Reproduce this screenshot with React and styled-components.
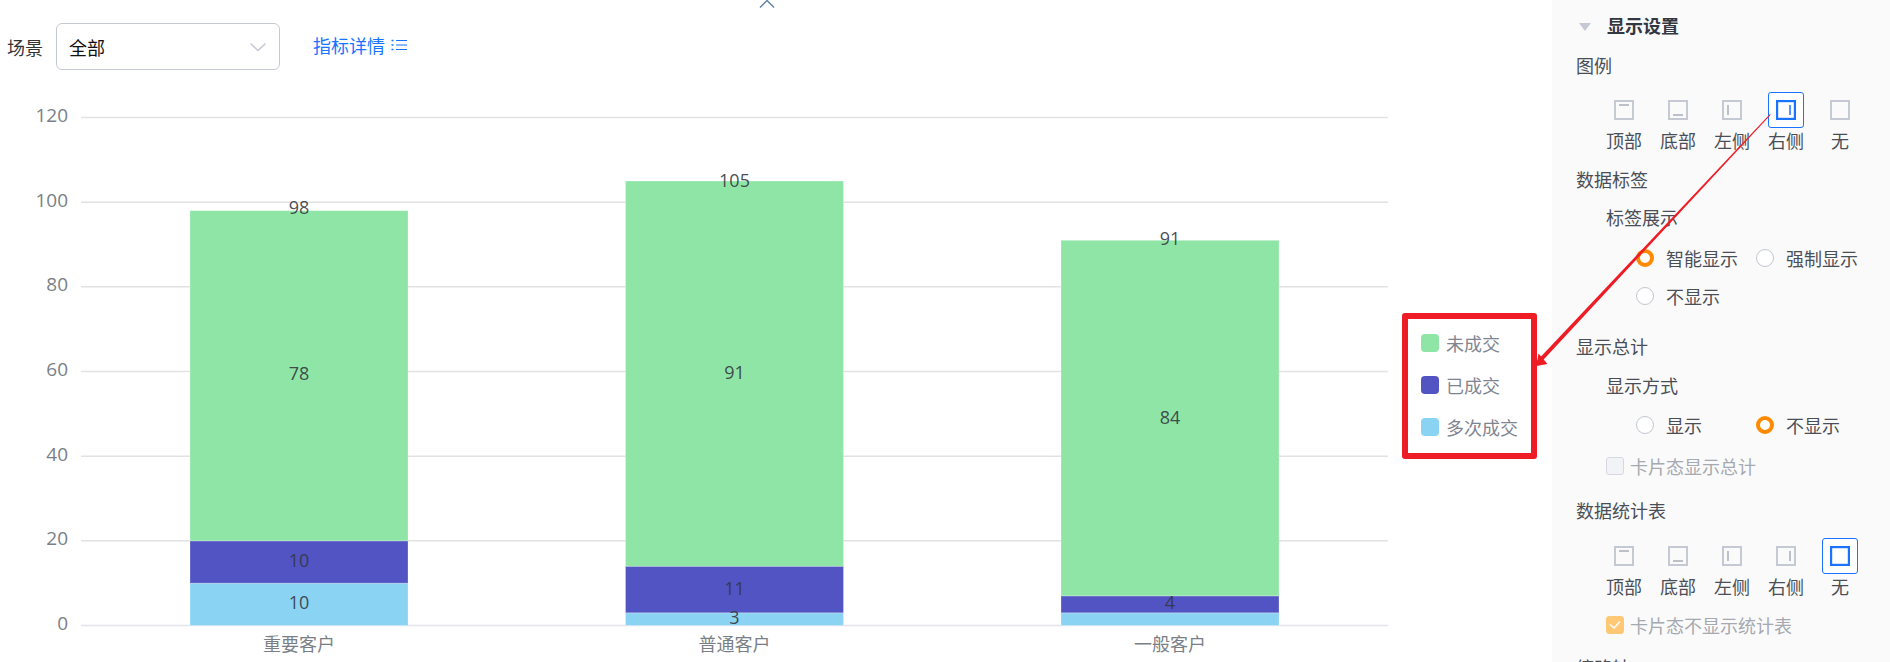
import React from "react";
import styled, { createGlobalStyle } from "styled-components";

const GlobalStyle = createGlobalStyle`
  html, body {
    margin: 0;
    padding: 0;
    background: #fff;
    font-family: "Open Sans", "Noto Sans CJK SC", sans-serif;
  }
`;

const Page = styled.div`
  position: relative;
  display: flex;
  width: 1890px;
  height: 662px;
  overflow: hidden;
`;

const Main = styled.div`
  width: 1552px;
  flex-shrink: 0;
  display: flex;
  flex-direction: column;
`;

const CollapseRow = styled.div`
  height: 8px;
  padding-right: 18px;
  display: flex;
  justify-content: center;
  align-items: flex-end;
`;

const Toolbar = styled.div`
  display: flex;
  align-items: center;
  height: 47px;
  margin-top: 15px;
  padding-left: 7px;
  font-size: 18px;
  color: #333;
`;

const Select = styled.div`
  box-sizing: border-box;
  width: 224px;
  height: 47px;
  margin-left: 13px;
  padding: 0 12px;
  display: flex;
  align-items: center;
  justify-content: space-between;
  border: 1px solid #c5c9d4;
  border-radius: 6px;
  color: #111;
`;

const DetailLink = styled.a`
  display: flex;
  align-items: center;
  gap: 6px;
  margin-left: 33px;
  margin-top: -3px;
  color: #1a73ff;
`;

const ChartRow = styled.div`
  display: flex;
  margin-top: 30px;
`;

const ChartSvg = styled.svg`
  flex-shrink: 0;
  display: block;
`;

const Tick = styled.text`
  font-size: ${(p) => p.$size || 18}px;
  fill: #7a7f87;
  text-anchor: ${(p) => p.$anchor || "end"};
  dominant-baseline: central;
`;

const BarValue = styled.text`
  font-size: 18px;
  fill: #33373f;
  fill-opacity: 0.9;
  text-anchor: middle;
  dominant-baseline: central;
`;

const Legend = styled.div`
  box-sizing: border-box;
  flex-shrink: 0;
  width: 135px;
  height: 146px;
  margin: 213px 0 0 2px;
  padding: 12px 0 0 13px;
  display: flex;
  flex-direction: column;
  gap: 18px;
  border: 6px solid #ee1c25;
  border-radius: 3px;
`;

const LegendItem = styled.div`
  display: flex;
  align-items: center;
  gap: 7px;
  height: 24px;
  font-size: 18px;
  white-space: nowrap;
  color: #7f8590;
`;

const Swatch = styled.span`
  width: 18px;
  height: 18px;
  border-radius: 4px;
  background: ${(p) => p.$color};
`;

const Panel = styled.div`
  box-sizing: border-box;
  flex: 1;
  padding: 13px 0 0 24px;
  background: #fafafb;
  font-size: 18px;
  color: #4a4f57;
`;

const Heading = styled.div`
  display: flex;
  align-items: center;
  gap: 16px;
  height: 24px;
  font-weight: 700;
  color: #33373f;
`;

const Triangle = styled.span`
  margin-left: 3px;
  margin-top: 4px;
  border-left: 6px solid transparent;
  border-right: 6px solid transparent;
  border-top: 8px solid #c5c9d4;
`;

const Line = styled.div`
  height: 24px;
  line-height: 24px;
  margin-top: ${(p) => p.$top}px;
  margin-left: ${(p) => p.$indent || 0}px;
`;

const TileRow = styled.div`
  display: flex;
  margin: ${(p) => p.$top}px 0 0 21px;
`;

const TileItem = styled.div`
  width: 54px;
  display: flex;
  flex-direction: column;
  align-items: center;
  gap: 1px;
  line-height: 24px;
`;

const Tile = styled.div`
  box-sizing: border-box;
  width: 36px;
  height: 36px;
  display: flex;
  align-items: center;
  justify-content: center;
  border: 1px solid ${(p) => (p.$active ? "#1a73ff" : "transparent")};
  border-radius: 3px;
  background: ${(p) => (p.$active ? "#fff" : "transparent")};
`;

const RadioGroup = styled.div`
  display: flex;
  flex-wrap: wrap;
  row-gap: 14px;
  width: 240px;
  margin: ${(p) => p.$top}px 0 0 60px;
`;

const RadioItem = styled.div`
  width: 120px;
  height: 24px;
  display: flex;
  align-items: center;
  gap: 12px;
`;

const RadioDot = styled.span`
  box-sizing: border-box;
  width: 18px;
  height: 18px;
  border-radius: 50%;
  background: #fff;
  border: ${(p) => (p.$on ? "4px solid #ff8a00" : "1px solid #c3c7d2")};
`;

const CheckRow = styled.div`
  display: flex;
  align-items: center;
  gap: 6px;
  height: 24px;
  margin: ${(p) => p.$top}px 0 0 30px;
  color: #a5a9b0;
`;

const CheckBox = styled.span`
  box-sizing: border-box;
  width: 18px;
  height: 18px;
  display: flex;
  align-items: center;
  justify-content: center;
  border-radius: 3px;
  background: ${(p) => (p.$on ? "#ffc875" : "#f2f3f6")};
  border: 1px solid ${(p) => (p.$on ? "#ffc875" : "#d5d8e0")};
`;

const ArrowOverlay = styled.svg`
  position: absolute;
  left: 0;
  top: 0;
  pointer-events: none;
`;

const COLORS = { lost: "#8ee5a6", won: "#5254c4", repeat: "#8bd3f2" };
const LEGEND = [
  { name: "未成交", color: COLORS.lost },
  { name: "已成交", color: COLORS.won },
  { name: "多次成交", color: COLORS.repeat },
];
const CHART_TOP = 100;
const UNIT = 4.233;
const BASE = 625.5 - CHART_TOP;
const toY = (v) => BASE - v * UNIT;
const BAR_W = 218;

// parts: [value, colour, label nudge in px, label hidden]
const BARS = [
  { name: "重要客户", cx: 299, totalUp: 4, parts: [[10, COLORS.repeat, -2], [10, COLORS.won, -2], [78, COLORS.lost, -3]] },
  { name: "普通客户", cx: 734.5, totalUp: 1, parts: [[3, COLORS.repeat, -2], [11, COLORS.won, -2], [91, COLORS.lost, -2]] },
  { name: "一般客户", cx: 1170, totalUp: 2.5, parts: [[3, COLORS.repeat, 0, true], [4, COLORS.won, -2], [84, COLORS.lost, -1]] },
];

function Bar({ bar }) {
  let from = 0;
  const segments = bar.parts.map(([value, color, nudge, hideLabel]) => {
    const start = from;
    from += value;
    return { value, color, nudge, hideLabel, start };
  });
  return (
    <g>
      {segments.map((s) => (
        <rect
          key={s.color}
          x={bar.cx - BAR_W / 2}
          y={toY(s.start + s.value)}
          width={BAR_W}
          height={s.value * UNIT}
          fill={s.color}
          stroke="#fff"
          strokeOpacity="0.25"
        />
      ))}
      {segments.map(
        (s) =>
          !s.hideLabel && (
            <BarValue key={s.color} x={bar.cx} y={toY(s.start + s.value / 2) + s.nudge}>
              {s.value}
            </BarValue>
          )
      )}
      <BarValue x={bar.cx} y={toY(from) - bar.totalUp}>
        {from}
      </BarValue>
      <Tick $anchor="middle" x={bar.cx} y={BASE + 18}>
        {bar.name}
      </Tick>
    </g>
  );
}

function Chart() {
  return (
    <ChartSvg width="1400" height="562" viewBox="0 0 1400 562">
      {[0, 20, 40, 60, 80, 100, 120].map((v) => (
        <g key={v}>
          <line x1="81" x2="1388" y1={toY(v)} y2={toY(v)} stroke={v ? "#e2e2e2" : "#e4e4ee"} strokeWidth="1.5" />
          <Tick $size={19} x="68" y={toY(v) - 2.5}>
            {v}
          </Tick>
        </g>
      ))}
      {BARS.map((b) => (
        <Bar key={b.name} bar={b} />
      ))}
    </ChartSvg>
  );
}

function LayoutIcon({ side, active }) {
  const color = active ? "#1a73ff" : "#c5c9d4";
  const inner = active ? "#1a73ff" : "#a9adb8";
  const lines = {
    top: [5, 5, 15, 5],
    bottom: [5, 15, 15, 15],
    left: [6, 5, 6, 15],
    right: [14, 5, 14, 15],
  };
  const l = lines[side];
  return (
    <svg width="20" height="20" viewBox="0 0 20 20">
      <rect x="1" y="1" width="18" height="18" fill="none" stroke={color} strokeWidth={active ? 2.4 : 2} />
      {l && <line x1={l[0]} y1={l[1]} x2={l[2]} y2={l[3]} stroke={inner} strokeWidth="1.5" />}
    </svg>
  );
}

const POSITIONS = [
  { side: "top", label: "顶部" },
  { side: "bottom", label: "底部" },
  { side: "left", label: "左侧" },
  { side: "right", label: "右侧" },
  { side: "none", label: "无" },
];

function TileOptions({ active, top }) {
  return (
    <TileRow $top={top}>
      {POSITIONS.map((p) => (
        <TileItem key={p.side}>
          <Tile $active={p.side === active}>
            <LayoutIcon side={p.side} active={p.side === active} />
          </Tile>
          {p.label}
        </TileItem>
      ))}
    </TileRow>
  );
}

function Radio({ on, children }) {
  return (
    <RadioItem>
      <RadioDot $on={on} />
      {children}
    </RadioItem>
  );
}

export default function App() {
  return (
    <Page>
      <GlobalStyle />
      <Main>
        <CollapseRow>
          <svg width="16" height="8" viewBox="0 0 16 8">
            <path d="M1 7.5 L8 0.5 L15 7.5" fill="none" stroke="#5f7f9f" strokeWidth="1.4" />
          </svg>
        </CollapseRow>
        <Toolbar>
          场景
          <Select>
            全部
            <svg width="18" height="10" viewBox="0 0 18 10">
              <path d="M1.5 1.5 L9 8.5 L16.5 1.5" fill="none" stroke="#c5c9d4" strokeWidth="1.6" />
            </svg>
          </Select>
          <DetailLink>
            指标详情
            <svg width="16" height="12" viewBox="0 0 16 12">
              <path d="M0.5 1.5h2M0.5 6h2M0.5 10.5h2" stroke="#1a73ff" strokeWidth="1.6" />
              <path d="M5 1.5h11M5 6h11M5 10.5h11" stroke="#1a73ff" strokeWidth="1.2" />
            </svg>
          </DetailLink>
        </Toolbar>
        <ChartRow>
          <Chart />
          <Legend>
            {LEGEND.map((l) => (
              <LegendItem key={l.name}>
                <Swatch $color={l.color} />
                {l.name}
              </LegendItem>
            ))}
          </Legend>
        </ChartRow>
      </Main>
      <Panel>
        <Heading>
          <Triangle />
          显示设置
        </Heading>
        <Line $top={17}>图例</Line>
        <TileOptions active="right" top={14} />
        <Line $top={15}>数据标签</Line>
        <Line $top={14} $indent={30}>
          标签展示
        </Line>
        <RadioGroup $top={16}>
          <Radio on>智能显示</Radio>
          <Radio>强制显示</Radio>
          <Radio>不显示</Radio>
        </RadioGroup>
        <Line $top={27}>显示总计</Line>
        <Line $top={15} $indent={30}>
          显示方式
        </Line>
        <RadioGroup $top={15}>
          <Radio>显示</Radio>
          <Radio on>不显示</Radio>
        </RadioGroup>
        <CheckRow $top={17}>
          <CheckBox />
          卡片态显示总计
        </CheckRow>
        <Line $top={21}>数据统计表</Line>
        <TileOptions active="none" top={15} />
        <CheckRow $top={14}>
          <CheckBox $on>
            <svg width="12" height="10" viewBox="0 0 12 10">
              <path d="M1 4.5 L5 8 L11 1.5" fill="none" stroke="#fff" strokeWidth="1.4" />
            </svg>
          </CheckBox>
          卡片态不显示统计表
        </CheckRow>
        <Line $top={19}>缩略轴</Line>
      </Panel>
      <ArrowOverlay width="1890" height="662" viewBox="0 0 1890 662">
        <polygon points="1770,114 1770.7,114.7 1538.6,365 1535.6,362.3" fill="#ee1c25" />
        <polygon points="1536.5,366 1538.5,353.5 1547.5,364" fill="#ee1c25" />
      </ArrowOverlay>
    </Page>
  );
}
